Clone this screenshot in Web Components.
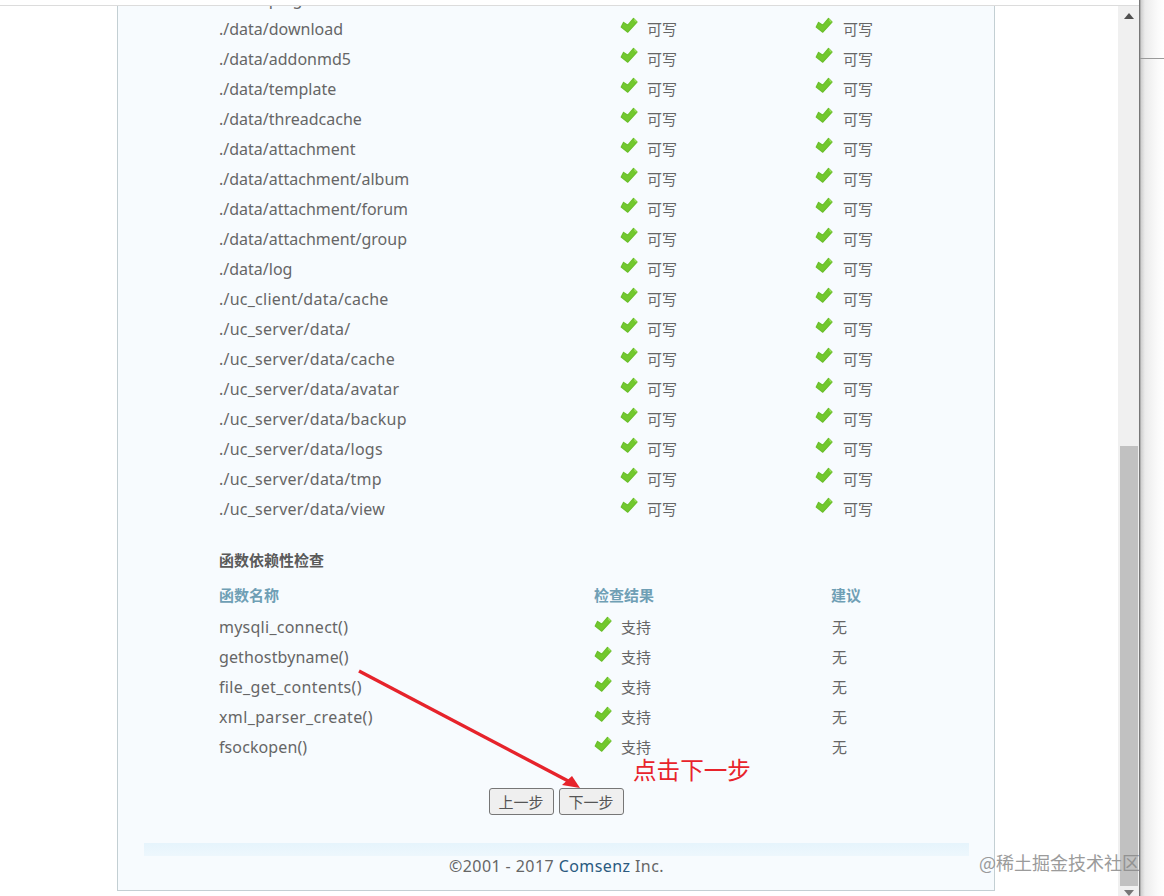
<!DOCTYPE html>
<html lang="zh"><head><meta charset="utf-8"><title>安装检查</title>
<style>
html,body{margin:0;padding:0;height:896px;overflow:hidden;background:#fff}
body{font-family:"Noto Sans","Noto Sans CJK SC",sans-serif;color:#666}
x-ok+x-ok{--ig:10px}
x-row.uc{letter-spacing:.24px}
x-row.fn{--cols:375px 238px 1fr;--im:-6px}
</style></head><body>
<template id="t-app"><style>
:host{display:flex;width:1164px;height:896px;overflow:hidden;position:relative;background:#fff}
.main{width:1139px;display:flex;flex-direction:column;flex:none}
.top{height:5px;flex:none;background:#fff;border-bottom:1px solid #dcdcdc}
.view{flex:1;overflow:hidden;display:flex;min-height:0}
.side{flex:1;background:linear-gradient(90deg,#8f8f8f 0,#cfcfcf 1px,#ececec 5px,#fbfbfb 18px,#fff 25px);display:flex;flex-direction:column;border-left:1px solid #777}
.side i{display:block;height:58px;border-bottom:1px solid #9a9a9a;box-sizing:content-box}
</style>
<div class="main"><div class="top"></div><div class="view"><slot></slot><slot name="bar"></slot></div></div>
<div class="side"><i></i></div>
<slot name="over"></slot></template>

<template id="t-scroll"><style>
:host{display:flex;flex-direction:column;width:21px;flex:none;background:#f0f0f0;margin-left:auto;box-sizing:border-box}
.a{height:20px;display:flex;align-items:center;justify-content:center;flex:none}
.sp{height:420px;flex:none}
.thumb{height:440px;background:#c1c1c1;margin:0 1px 0 2px;flex:none}
</style>
<div class="a"><svg width="10" height="6" viewBox="0 0 10 6"><path d="M5 0l5 6H0z" fill="#505050"/></svg></div>
<div class="sp"></div><div class="thumb"></div>
<div class="a" style="height:10px;align-items:flex-start;padding-top:4px"><svg width="10" height="6" viewBox="0 0 10 6"><path d="M0 0h10L5 6z" fill="#777"/></svg></div></template>

<template id="t-card"><style>
:host{display:block;margin-left:117px;width:878px;height:885px;box-sizing:border-box;border:1px solid #c3cfd3;border-top:0;background:#f7fbfe;overflow:hidden;flex:none}
.in{margin-top:-22px;padding-left:101px;display:block}
</style><div class="in"><slot></slot></div><slot name="foot"></slot></template>

<template id="t-row"><style>
:host{display:grid;height:30px;align-items:center;font-size:16px;line-height:30px;white-space:nowrap;grid-template-columns:var(--cols,401px 195px 1fr)}
</style><slot></slot></template>

<template id="t-ok"><style>
:host{display:flex;align-items:center;font:15px/20px "Noto Sans CJK SC",sans-serif;color:#666;letter-spacing:0}
svg{width:18px;height:17px;margin:var(--im,-8px) var(--ig,9px) 0 0;flex:none}
span{display:block}
</style><svg viewBox="0 0 18 17"><path d="M1.2 10 3.6 5.4 7.8 8.2 13.5 1.4 17 5 7.8 15.2Z" fill="#72c82e" stroke="#6abf2a" stroke-width="1.2" stroke-linejoin="round"/><path d="M14 2.4 16.2 4.8" fill="none" stroke="#9be25a" stroke-width="1.2"/></svg><span><slot></slot></span></template>

<template id="t-h"><style>
:host{display:block;font:bold 15px/30px "Noto Sans CJK SC",sans-serif;color:#5a5a5a;margin-top:21px;height:30px}
</style><slot></slot></template>

<template id="t-th"><style>
:host{display:grid;grid-template-columns:375px 237px 1fr;font:bold 15px/30px "Noto Sans CJK SC",sans-serif;color:#6f9fb5;height:30px;margin:5px 0 2px}
</style><slot></slot></template>

<template id="t-actions"><style>
:host{display:flex;gap:5px;justify-content:center;width:878px;margin:26px 0 0 -101px;box-sizing:border-box;padding-right:2px}
</style><slot></slot></template>

<template id="t-btn"><style>
:host{display:block}
button{width:65px;height:27px;padding:0;font:15px "Noto Sans CJK SC",sans-serif;color:#555;background:#efefef;border:1px solid #767676;border-radius:3px}
</style><button><slot></slot></button></template>

<template id="t-foot"><style>
:host{display:block;margin:28px 25px 0 26px;font-size:16px;color:#666;text-align:center;letter-spacing:.42px}
.band{height:13px;background:linear-gradient(#e6f4fc,#edf7fd)}
p{margin:0;line-height:20px}
::slotted(a){color:#2a5a80;text-decoration:none}
</style><div class="band"></div><p><slot></slot></p></template>

<template id="t-over"><style>
:host{position:absolute;left:0;top:0;width:1164px;height:896px;pointer-events:none;display:block}
svg{position:absolute;left:0;top:0}
.n{position:absolute;left:633px;top:758px;font:23.6px/22px "Noto Sans CJK SC",sans-serif;color:#e8232b;white-space:nowrap}
.w{position:absolute;left:979px;top:851px;font:18px/22px "Noto Sans CJK SC",sans-serif;color:#8a8a8a;white-space:nowrap;opacity:.85}
</style>
<svg width="1164" height="896" viewBox="0 0 1164 896"><path d="M359 671 572 783" stroke="#e6232b" stroke-width="3.4" fill="none"/><path d="M580 788 562 785 572 776Z" fill="#e6232b"/></svg>
<div class="n">点击下一步</div><div class="w">@稀土掘金技术社区</div></template>

<x-app>
<x-card>
<x-row>./data/plugin</x-row>
<x-row>./data/download<x-ok>可写</x-ok><x-ok>可写</x-ok></x-row>
<x-row>./data/addonmd5<x-ok>可写</x-ok><x-ok>可写</x-ok></x-row>
<x-row>./data/template<x-ok>可写</x-ok><x-ok>可写</x-ok></x-row>
<x-row>./data/threadcache<x-ok>可写</x-ok><x-ok>可写</x-ok></x-row>
<x-row>./data/attachment<x-ok>可写</x-ok><x-ok>可写</x-ok></x-row>
<x-row>./data/attachment/album<x-ok>可写</x-ok><x-ok>可写</x-ok></x-row>
<x-row>./data/attachment/forum<x-ok>可写</x-ok><x-ok>可写</x-ok></x-row>
<x-row>./data/attachment/group<x-ok>可写</x-ok><x-ok>可写</x-ok></x-row>
<x-row>./data/log<x-ok>可写</x-ok><x-ok>可写</x-ok></x-row>
<x-row class="uc">./uc_client/data/cache<x-ok>可写</x-ok><x-ok>可写</x-ok></x-row>
<x-row class="uc">./uc_server/data/<x-ok>可写</x-ok><x-ok>可写</x-ok></x-row>
<x-row class="uc">./uc_server/data/cache<x-ok>可写</x-ok><x-ok>可写</x-ok></x-row>
<x-row class="uc">./uc_server/data/avatar<x-ok>可写</x-ok><x-ok>可写</x-ok></x-row>
<x-row class="uc">./uc_server/data/backup<x-ok>可写</x-ok><x-ok>可写</x-ok></x-row>
<x-row class="uc">./uc_server/data/logs<x-ok>可写</x-ok><x-ok>可写</x-ok></x-row>
<x-row class="uc">./uc_server/data/tmp<x-ok>可写</x-ok><x-ok>可写</x-ok></x-row>
<x-row class="uc">./uc_server/data/view<x-ok>可写</x-ok><x-ok>可写</x-ok></x-row>
<x-h>函数依赖性检查</x-h>
<x-th><span>函数名称</span><span>检查结果</span><span>建议</span></x-th>
<x-row class="fn" style="letter-spacing:.25px">mysqli_connect()<x-ok>支持</x-ok><x-note>无</x-note></x-row>
<x-row class="fn" style="letter-spacing:.13px">gethostbyname()<x-ok>支持</x-ok><x-note>无</x-note></x-row>
<x-row class="fn" style="letter-spacing:.33px">file_get_contents()<x-ok>支持</x-ok><x-note>无</x-note></x-row>
<x-row class="fn" style="letter-spacing:.37px">xml_parser_create()<x-ok>支持</x-ok><x-note>无</x-note></x-row>
<x-row class="fn" style="letter-spacing:.1px">fsockopen()<x-ok>支持</x-ok><x-note>无</x-note></x-row>
<x-actions><x-btn>上一步</x-btn><x-btn>下一步</x-btn></x-actions>
<x-foot slot="foot">©2001 - 2017 <a>Comsenz</a> Inc.</x-foot>
</x-card>
<x-scroll slot="bar"></x-scroll>
<x-over slot="over"></x-over>
</x-app>
<script>
function def(name,tid){customElements.define(name,class extends HTMLElement{constructor(){super();this.attachShadow({mode:'open'}).appendChild(document.getElementById(tid).content.cloneNode(true));}});}
[['x-app','t-app'],['x-scroll','t-scroll'],['x-card','t-card'],['x-row','t-row'],['x-ok','t-ok'],['x-h','t-h'],['x-th','t-th'],['x-actions','t-actions'],['x-btn','t-btn'],['x-foot','t-foot'],['x-over','t-over']].forEach(function(p){def(p[0],p[1]);});
customElements.define('x-note',class extends HTMLElement{constructor(){super();this.attachShadow({mode:'open'}).innerHTML='<style>:host{display:block;font:15px "Noto Sans CJK SC",sans-serif;color:#666;padding-bottom:2px;letter-spacing:0}</style><slot></slot>';}});
</script>
</body></html>
